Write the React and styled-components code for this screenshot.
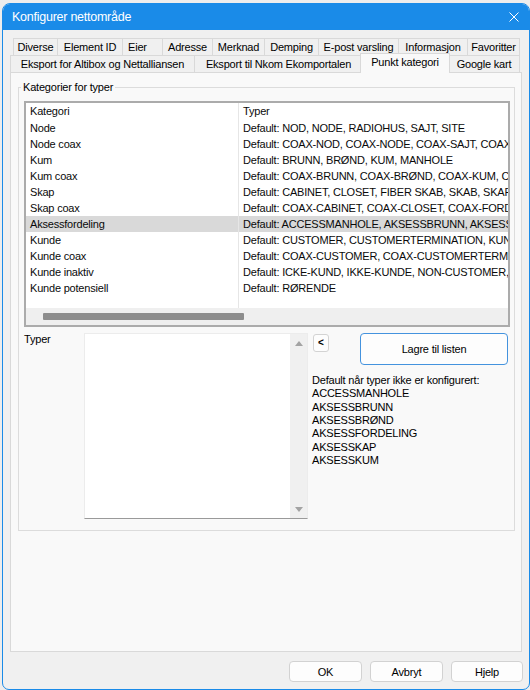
import React from 'react';
import styled, { createGlobalStyle } from 'styled-components';

const Global = createGlobalStyle`
  html, body { margin: 0; padding: 0; }
  body {
    width: 530px; height: 690px; overflow: hidden; background: #ececec;
    font-family: "Liberation Sans", Arial, sans-serif; color: #000;
  }
  * { box-sizing: border-box; }
`;

const Desktop = styled.div`
  width: 530px; height: 690px; padding: 3px 0 0 2px; background: #ededed;
`;

const Window = styled.div`
  width: 528px; height: 687px; border: 1px solid #1a8be8; border-radius: 8px 8px 7px 7px;
  overflow: hidden; display: flex; flex-direction: column; background: #f0f0f0;
`;

const TitleBar = styled.div`
  height: 26px; flex: none; background: #1a8be8; color: #fff;
  display: flex; align-items: center; justify-content: space-between;
  padding: 0 10px 1px 9px; font-size: 12.5px; letter-spacing: -0.25px;
`;

const Body = styled.div`
  flex: 1; display: flex; flex-direction: column; padding: 8px 7px 0 7px;
`;

const Tabs = styled.div`
  display: flex; flex-direction: column; height: 34px; flex: none;
`;

const TabRow = styled.div`
  display: flex; height: 17px; margin-left: ${p => p.$indent || 0}px;
`;

const Tab = styled.div`
  width: ${p => p.$w}px; height: 17px; flex: none;
  border-top: 1px solid #d9d9d9; border-left: 1px solid #d9d9d9;
  &:last-child { border-right: 1px solid #d9d9d9; }
  background: #f0f0f0; font-size: 11px; letter-spacing: -0.2px; line-height: 16px;
  text-align: ${p => (p.$left ? 'left' : 'center')};
  padding-left: ${p => (p.$left ? 5 : 0)}px;
  white-space: nowrap; overflow: hidden;
`;

const ActiveTab = styled.div`
  width: ${p => p.$w + 4}px; height: 20px; flex: none; margin: -2px -2px 0 -2px;
  position: relative; z-index: 1;
  border: 1px solid #d9d9d9; border-bottom: none; background: #f9f9f9;
  font-size: 11px; letter-spacing: -0.2px; line-height: 17px;
  text-align: center; white-space: nowrap;
`;

const TabPage = styled.div`
  height: 580px; flex: none; background: #f9f9f9; border: 1px solid #d9d9d9;
  display: flex; flex-direction: column;
`;

const Group = styled.fieldset`
  margin: 8px 6px 0 7px; padding: 8px 4px 11px 5px; border: 1px solid #dcdcdc;
  min-width: 0;
`;

const GroupLabel = styled.legend`
  padding: 0 2px; margin-left: -3px; font-size: 11px; line-height: 12px;
  letter-spacing: -0.2px;
`;

const ListView = styled.div`
  height: 226px; border: 2px solid #ababab; background: #fff;
  display: flex; flex-direction: column; overflow: hidden;
`;

const Row = styled.div`
  display: grid; grid-template-columns: 212px 1fr; height: ${p => (p.$header ? 17 : 16)}px; flex: none;
  background: ${p => (p.$selected ? '#d9d9d9' : '#fff')};
`;

const Fill = styled.div`
  display: grid; grid-template-columns: 212px 1fr; flex: 1;
`;

const Cell = styled.div`
  padding-left: 4px;
  border-left: ${p => (p.$second ? '1px solid #e6e6e6' : 'none')};
  font-size: 11px; letter-spacing: -0.2px; line-height: 16px; color: #0a0a0a;
  white-space: nowrap; overflow: hidden;
`;

const HScroll = styled.div`
  height: 17px; flex: none; background: #efefef; display: flex; align-items: center;
`;

const HThumb = styled.div`
  margin-left: 17px; width: 201px; height: 7px; background: #8d8d8d; border-radius: 1px;
`;

const Bottom = styled.div`
  display: flex; margin-top: 6px; height: 186px;
`;

const FieldLabel = styled.div`
  width: 60px; flex: none; font-size: 11px; letter-spacing: -0.2px; line-height: 13px;
`;

const TextBox = styled.div`
  width: 224px; height: 186px; flex: none; background: #fff;
  border: 1px solid #ececec; border-bottom-color: #9a9a9a;
  display: flex; justify-content: flex-end;
`;

const VScroll = styled.div`
  width: 17px; background: #f0f0f0; display: flex; flex-direction: column;
  justify-content: space-between; align-items: center; padding: 7px 0 6px;
`;

const Side = styled.div`
  width: 195px; margin-left: 5px; display: flex; flex-direction: column;
`;

const SideTop = styled.div`
  display: flex; justify-content: space-between; align-items: flex-start;
`;

const SmallButton = styled.div`
  width: 16px; height: 18px; margin-top: 1px; background: #fdfdfd; border: 1px solid #d3d3d3;
  border-radius: 3px; display: flex; align-items: center; justify-content: center;
  font-size: 10px; font-weight: bold; line-height: 1;
`;

const DefaultButton = styled.div`
  width: 148px; height: 32px; background: #fdfdfd; border: 1px solid #4493de;
  border-radius: 4px; display: flex; align-items: center; justify-content: center;
  font-size: 11px; letter-spacing: -0.2px;
`;

const Info = styled.div`
  margin: 9px 0 0 -1px; font-size: 11px; letter-spacing: -0.2px; line-height: 13.33px;
`;

const ButtonRow = styled.div`
  display: flex; justify-content: flex-end; gap: 8px; margin: 9px -1px 0 0;
`;

const DialogButton = styled.div`
  width: ${p => p.$w}px; height: 21px; background: #fdfdfd; border: 1px solid #d2d2d2;
  border-radius: 4px; display: flex; align-items: center; justify-content: center;
  font-size: 11px; letter-spacing: -0.2px;
`;

const Arrow = ({ down }) => (
  <svg width="8" height="5" viewBox="0 0 8 5">
    <polygon points={down ? '0,0 8,0 4,5' : '0,5 8,5 4,0'} fill="#a3a3a3" />
  </svg>
);

const CloseIcon = () => (
  <svg width="10" height="10" viewBox="0 0 10 10">
    <path d="M0.5 0.5 L9.5 9.5 M9.5 0.5 L0.5 9.5" stroke="#fff" strokeWidth="1" />
  </svg>
);

const row1 = [
  ['Diverse', 44], ['Element ID', 65], ['Eier', 40, true], ['Adresse', 50], ['Merknad', 52],
  ['Demping', 54], ['E-post varsling', 80], ['Informasjon', 69], ['Favoritter', 53],
];
const row2 = [
  ['Eksport for Altibox og Nettalliansen', 184], ['Eksport til Nkom Ekomportalen', 168],
  ['Punkt kategori', 86, false, true], ['Google kart', 72],
];

const rows = [
  ['Node', 'Default: NOD, NODE, RADIOHUS, SAJT, SITE'],
  ['Node coax', 'Default: COAX-NOD, COAX-NODE, COAX-SAJT, COAX-SITE'],
  ['Kum', 'Default: BRUNN, BRØND, KUM, MANHOLE'],
  ['Kum coax', 'Default: COAX-BRUNN, COAX-BRØND, COAX-KUM, COAX-MANHOLE'],
  ['Skap', 'Default: CABINET, CLOSET, FIBER SKAB, SKAB, SKAP'],
  ['Skap coax', 'Default: COAX-CABINET, COAX-CLOSET, COAX-FORDELING'],
  ['Aksessfordeling', 'Default: ACCESSMANHOLE, AKSESSBRUNN, AKSESSBRØND', true],
  ['Kunde', 'Default: CUSTOMER, CUSTOMERTERMINATION, KUNDE'],
  ['Kunde coax', 'Default: COAX-CUSTOMER, COAX-CUSTOMERTERMINATION'],
  ['Kunde inaktiv', 'Default: ICKE-KUND, IKKE-KUNDE, NON-CUSTOMER, INAKTIV'],
  ['Kunde potensiell', 'Default: RØRENDE'],
];

const defaults = ['ACCESSMANHOLE', 'AKSESSBRUNN', 'AKSESSBRØND', 'AKSESSFORDELING', 'AKSESSKAP', 'AKSESSKUM'];

export default function App() {
  return (
    <>
      <Global />
      <Desktop>
        <Window>
          <TitleBar>
            <span>Konfigurer nettområde</span>
            <CloseIcon />
          </TitleBar>
          <Body>
            <Tabs>
              <TabRow $indent={3}>
                {row1.map(([t, w, l]) => <Tab key={t} $w={w} $left={l}>{t}</Tab>)}
              </TabRow>
              <TabRow>
                {row2.map(([t, w, l, a]) =>
                  a ? <ActiveTab key={t} $w={w}>{t}</ActiveTab> : <Tab key={t} $w={w} $left={l}>{t}</Tab>
                )}
              </TabRow>
            </Tabs>
            <TabPage>
              <Group>
                <GroupLabel>Kategorier for typer</GroupLabel>
                <ListView>
                  <Row $header>
                    <Cell>Kategori</Cell>
                    <Cell $second>Typer</Cell>
                  </Row>
                  {rows.map(([k, t, s]) => (
                    <Row key={k} $selected={s}>
                      <Cell>{k}</Cell>
                      <Cell $second>{t}</Cell>
                    </Row>
                  ))}
                  <Fill>
                    <Cell />
                    <Cell $second />
                  </Fill>
                  <HScroll><HThumb /></HScroll>
                </ListView>
                <Bottom>
                  <FieldLabel>Typer</FieldLabel>
                  <TextBox>
                    <VScroll>
                      <Arrow />
                      <Arrow down />
                    </VScroll>
                  </TextBox>
                  <Side>
                    <SideTop>
                      <SmallButton>&lt;</SmallButton>
                      <DefaultButton>Lagre til listen</DefaultButton>
                    </SideTop>
                    <Info>
                      <div>Default når typer ikke er konfigurert:</div>
                      {defaults.map(d => <div key={d}>{d}</div>)}
                    </Info>
                  </Side>
                </Bottom>
              </Group>
            </TabPage>
            <ButtonRow>
              <DialogButton $w={73}>OK</DialogButton>
              <DialogButton $w={73}>Avbryt</DialogButton>
              <DialogButton $w={72}>Hjelp</DialogButton>
            </ButtonRow>
          </Body>
        </Window>
      </Desktop>
    </>
  );
}
